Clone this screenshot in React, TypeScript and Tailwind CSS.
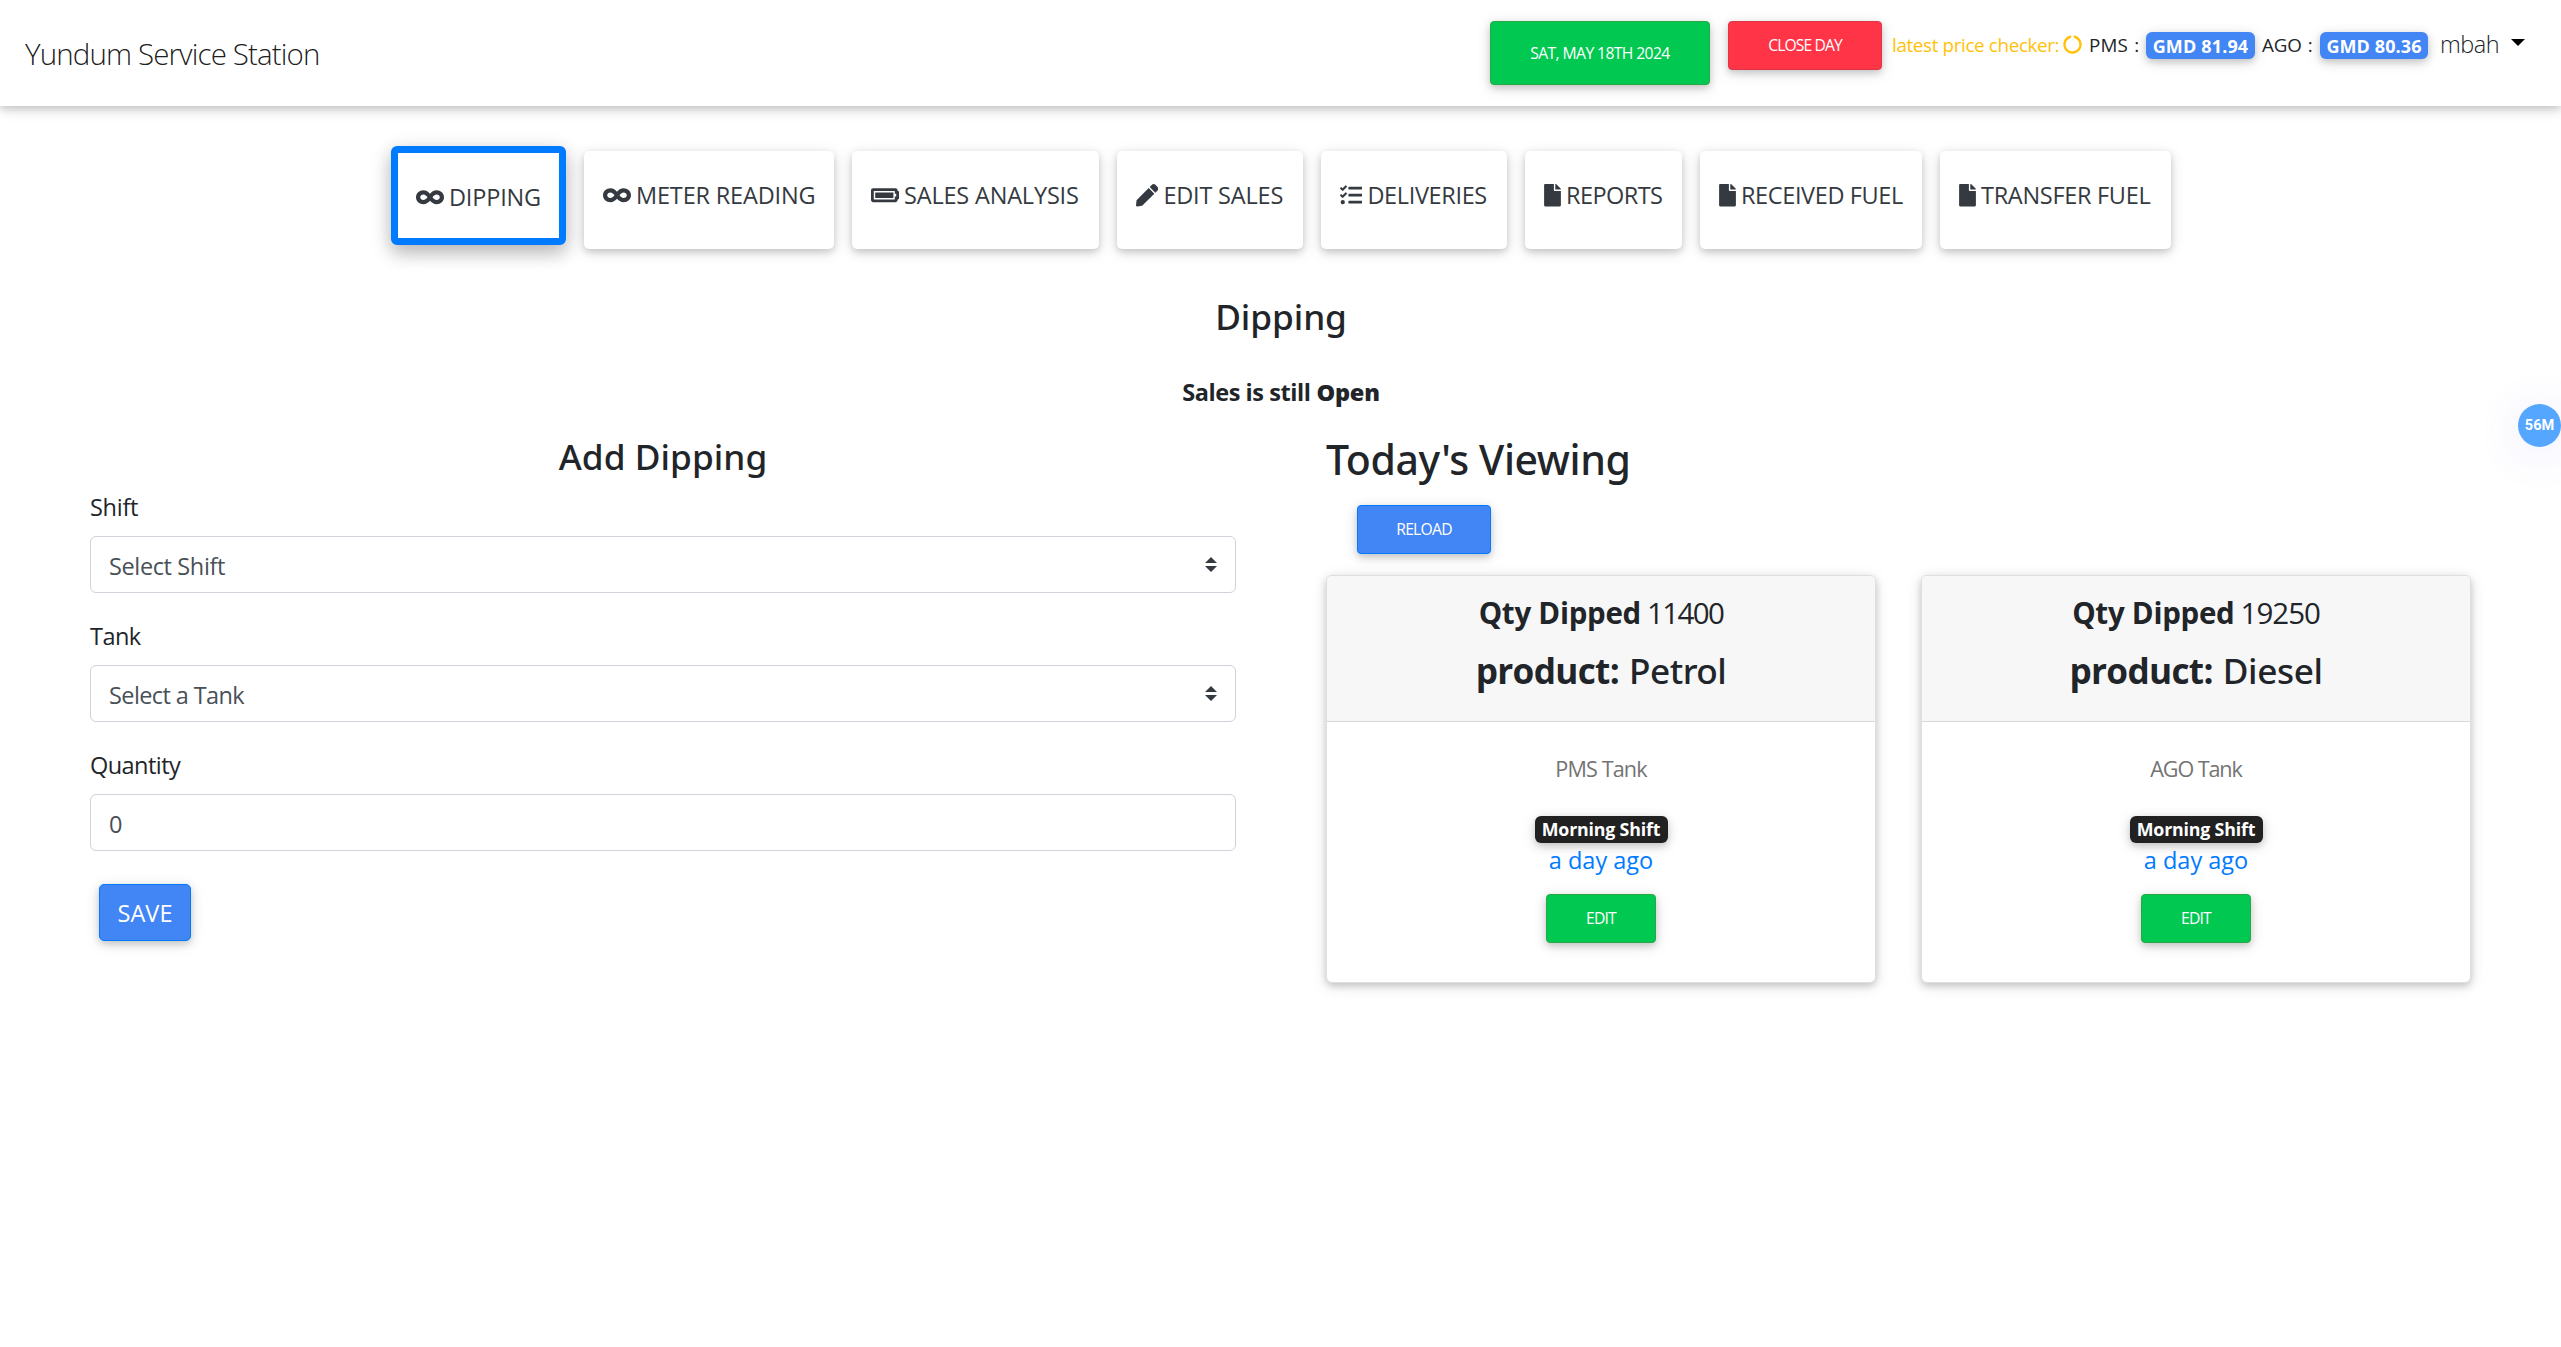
import type { ReactNode } from "react";
import { FaBatteryFull, FaCircleNotch, FaFile, FaInfinity, FaPen, FaTasks } from "react-icons/fa";

const shadow = "shadow-[0_3px_7.5px_rgba(0,0,0,0.16),0_3px_15px_rgba(0,0,0,0.12)]";
const smallText = "text-[15.7px] text-white whitespace-nowrap";
const bodyText = "text-[23.5px] leading-9 whitespace-nowrap";

const navItems = [
  { label: "METER READING", icon: <FaInfinity className="w-[28px] h-[22.4px]" />, box: "w-[250px]", track: "tracking-[-0.17px]" },
  { label: "SALES ANALYSIS", icon: <FaBatteryFull className="w-[28px] h-[22.4px]" />, box: "w-[247px]", track: "tracking-[-0.18px]" },
  { label: "EDIT SALES", icon: <FaPen className="size-[22.4px]" />, box: "w-[186px]", track: "tracking-[-0.2px]" },
  { label: "DELIVERIES", icon: <FaTasks className="size-[22.4px]" />, box: "w-[186px]", track: "tracking-[-0.35px]" },
  { label: "REPORTS", icon: <FaFile className="w-[17px] h-[22.4px]" />, box: "w-[157px]", track: "tracking-[-0.57px]" },
  { label: "RECEIVED FUEL", icon: <FaFile className="w-[17px] h-[22.4px]" />, box: "w-[222px]", track: "tracking-[-0.38px]" },
  { label: "TRANSFER FUEL", icon: <FaFile className="w-[17px] h-[22.4px]" />, box: "w-[231px]", track: "tracking-[-0.3px]" },
];

function PriceBadge({ children, className }: { children: ReactNode; className: string }) {
  return (
    <span className={`flex items-center justify-center h-[27px] rounded-[6px] bg-[#4285f4] text-white font-bold text-[18px] whitespace-nowrap ${shadow} ${className}`}>
      {children}
    </span>
  );
}

function Header() {
  return (
    <header className={`flex h-[106px] bg-white pl-[25px] pr-[36px] ${shadow}`}>
      <span className="self-center pt-[3px] text-[29.5px] font-light tracking-[-0.88px] text-black/90 whitespace-nowrap">
        Yundum Service Station
      </span>
      <div className="ml-auto flex items-start pt-[21px]">
        <button className={`w-[220px] h-[64px] pt-[2px] rounded-[4px] border border-[#28a745] bg-[#00c851] tracking-[-0.6px] ${smallText} ${shadow}`}>
          SAT, MAY 18TH 2024
        </button>
        <button className={`ml-[18px] w-[154px] h-[49px] pt-px rounded-[4px] border border-[#dc3545] bg-[#ff3547] tracking-[-0.9px] ${smallText} ${shadow}`}>
          CLOSE DAY
        </button>
        <div className="ml-[10px] flex h-[49px] items-center text-[18.8px] leading-[28px] whitespace-nowrap text-[#212529]">
          <span className="relative -top-px w-[171px] text-[#ffc107] tracking-[-0.34px]">latest price checker:</span>
          <FaCircleNotch className="relative -top-px size-[19px] text-[#ffc107]" />
          <span className="relative -top-px ml-[7px] w-[57px] tracking-[0.1px] [word-spacing:1.5px]">PMS :</span>
          <PriceBadge className="w-[109px] tracking-[0.15px]">GMD 81.94</PriceBadge>
          <span className="relative -top-px ml-[7px] w-[58px] tracking-[-0.2px] [word-spacing:1.5px]">AGO :</span>
          <PriceBadge className="w-[108px] tracking-[0.1px]">GMD 80.36</PriceBadge>
          <span className="relative -top-[2px] ml-[12px] w-[71px] text-[23.5px] font-light tracking-[-0.5px]">mbah</span>
          <span className="relative -top-[3px] border-x-[7px] border-t-[7px] border-x-transparent border-t-black" />
        </div>
      </div>
    </header>
  );
}

function Nav() {
  return (
    <nav className="flex justify-center gap-[18px] pt-[40px] pl-px h-[144px] text-[#343a40]">
      <button className="flex items-center gap-[5px] w-[175px] h-[99px] pl-[18px] pt-[3px] rounded-[6px] border-[7px] border-[#007bff] bg-white shadow-[0_7.5px_16.5px_rgba(0,0,0,0.18),0_6px_22.5px_rgba(0,0,0,0.15)]">
        <FaInfinity className="w-[28px] h-[22.4px] shrink-0" />
        <span className={`${bodyText} tracking-[-0.19px]`}>DIPPING</span>
      </button>
      {navItems.map((n) => (
        <button key={n.label} className={`mt-[5px] flex items-center gap-[5px] h-[98px] pl-[19px] pb-[11px] rounded-[5px] bg-white ${n.box} ${shadow}`}>
          <span className="shrink-0 pt-[2px]">{n.icon}</span>
          <span className={`${bodyText} ${n.track}`}>{n.label}</span>
        </button>
      ))}
    </nav>
  );
}

function SelectArrows() {
  return (
    <svg viewBox="0 0 4 5" className="w-[12px] h-[15px] mr-[18px]" fill="#343a40">
      <path d="M2 0L0 2h4zm0 5L0 3h4z" />
    </svg>
  );
}

function Field({ label, value, select, labelTrack, track }: { label: string; value: string; select?: boolean; labelTrack: string; track: string }) {
  return (
    <div className="mb-[25px]">
      <div className={`${bodyText} ${labelTrack}`}>{label}</div>
      <div className="mt-[11px] flex items-center justify-between h-[57px] pl-[18px] rounded-[6px] border border-[#ced4da] bg-white">
        <span className={`${bodyText} pt-[3px] text-[#495057] ${track}`}>{value}</span>
        {select && <SelectArrows />}
      </div>
    </div>
  );
}

function TankCard({ qty, qtyTrack, product, productTrack, tank, tankTrack }: { qty: string; qtyTrack: string; product: string; productTrack: string; tank: string; tankTrack: string }) {
  return (
    <div className={`w-[550px] h-[408px] rounded-[6px] border border-[#dfdfdf] bg-white overflow-hidden ${shadow}`}>
      <div className="flex flex-col items-center h-[146px] pt-[15px] bg-[#f7f7f7] border-b border-[#d8d8d8] font-medium whitespace-nowrap">
        <div className="flex gap-[6px] text-[29.5px] leading-[44px]">
          <b className="font-bold tracking-[-0.26px]">Qty Dipped</b>
          <span className={qtyTrack}>{qty}</span>
        </div>
        <div className="mt-[9px] flex gap-[10px] text-[35.2px] leading-[52px]">
          <b className="font-bold tracking-[-0.68px]">product:</b>
          <span className={`font-['Noto_Sans'] ${productTrack}`}>{product}</span>
        </div>
      </div>
      <div className="flex flex-col items-center pt-[31px]">
        <span className={`text-[21.6px] leading-[32px] text-[#747373] whitespace-nowrap ${tankTrack}`}>{tank}</span>
        <span className={`mt-[31px] flex items-center justify-center w-[133px] h-[27px] rounded-[6px] bg-[#212121] text-white text-[17.8px] font-bold tracking-[-0.18px] whitespace-nowrap ${shadow}`}>
          Morning Shift
        </span>
        <span className={`-mt-px ${bodyText} text-[#007bff]`}>a day ago</span>
        <button className={`mt-[16px] w-[110px] h-[49px] pt-px rounded-[4px] border border-[#28a745] bg-[#00c851] tracking-[-0.8px] ${smallText} ${shadow}`}>
          EDIT
        </button>
      </div>
    </div>
  );
}

export default function App() {
  return (
    <div className="relative w-[2561px] h-[1347px] overflow-hidden bg-white text-[#212529] font-['Open_Sans',sans-serif]">
      <Header />
      <Nav />
      <h2 className="mt-[39px] pl-px text-center text-[35.2px] leading-[54px] font-medium font-['Noto_Sans'] tracking-[-0.07px]">Dipping</h2>
      <div className={`mt-[31px] pl-px flex justify-center gap-[6px] font-bold ${bodyText}`}>
        <span className="tracking-[-0.44px]">Sales is still</span>
        <span className="font-extrabold tracking-[-0.22px]">Open</span>
      </div>
      <div className="flex">
        <section className="ml-[90px] w-[1146px] pt-[24px]">
          <h3 className="text-center text-[35.2px] leading-[44px] font-medium font-['Noto_Sans'] tracking-[0.04px]">Add Dipping</h3>
          <div className="mt-[11px]">
            <Field label="Shift" value="Select Shift" select labelTrack="tracking-[-0.28px]" track="tracking-[-0.37px]" />
            <Field label="Tank" value="Select a Tank" select labelTrack="tracking-[-0.55px]" track="tracking-[-0.6px]" />
            <Field label="Quantity" value="0" labelTrack="tracking-[-0.55px]" track="tracking-normal" />
          </div>
          <button className={`mt-[8px] ml-[9px] w-[92px] h-[57px] rounded-[5px] border border-[#007bff] bg-[#4285f4] text-white tracking-[0.08px] ${bodyText} ${shadow}`}>
            SAVE
          </button>
        </section>
        <section className="ml-[90px] pt-[24px]">
          <h2 className="text-[41px] leading-[50px] font-medium font-['Noto_Sans'] tracking-[-0.42px] whitespace-nowrap">Today's Viewing</h2>
          <button className={`block mt-[21px] ml-[31px] w-[134px] h-[49px] pt-px rounded-[4px] border border-[#007bff] bg-[#4285f4] tracking-[-0.75px] ${smallText} ${shadow}`}>
            RELOAD
          </button>
          <div className="mt-[21px] flex gap-[45px]">
            <TankCard qty="11400" qtyTrack="tracking-[-1.6px]" product="Petrol" productTrack="tracking-[-0.5px]" tank="PMS Tank" tankTrack="tracking-[-0.86px]" />
            <TankCard qty="19250" qtyTrack="tracking-[-1px]" product="Diesel" productTrack="tracking-[-0.4px]" tank="AGO Tank" tankTrack="tracking-[-1.1px]" />
          </div>
        </section>
      </div>
      <div className="absolute top-[404px] right-0 flex items-center justify-center size-[43px] rounded-full bg-[#55a6ff] text-white text-[14.5px] font-bold font-['Roboto',sans-serif] shadow-[0_6px_45px_rgba(90,90,255,0.14)]">
        56M
      </div>
    </div>
  );
}
